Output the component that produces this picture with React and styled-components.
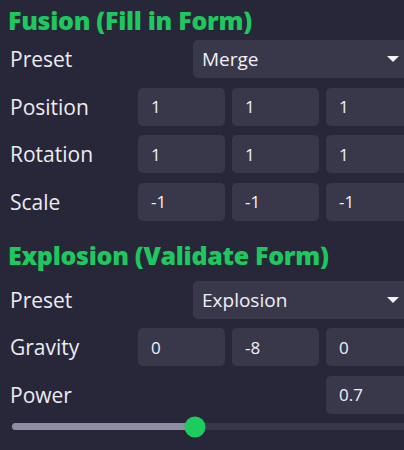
import React from "react";
import styled, { createGlobalStyle } from "styled-components";

const GlobalStyle = createGlobalStyle`
  html, body {
    margin: 0;
    padding: 0;
    background: #28273a;
  }
  body {
    font-family: "Open Sans", Lato, sans-serif;
  }
`;

const fusion = [
  { label: "Position", values: ["1", "1", "1"] },
  { label: "Rotation", values: ["1", "1", "1"] },
  { label: "Scale", values: ["-1", "-1", "-1"] },
];

const power = 0.456;

const App = () => {
  return (
    <Wrapper>
      <GlobalStyle />
      <Heading>Fusion (Fill in Form)</Heading>
      <Row>
        <Label>Preset</Label>
        <Select>
          <span>Merge</span>
          <Caret />
        </Select>
      </Row>
      {fusion.map((row) => (
        <Row key={row.label}>
          <Label>{row.label}</Label>
          <Fields>
            {row.values.map((v, i) => (
              <Field key={i}>{v}</Field>
            ))}
          </Fields>
        </Row>
      ))}

      <Heading second>Explosion (Validate Form)</Heading>
      <Row>
        <Label>Preset</Label>
        <Select>
          <span>Explosion</span>
          <Caret />
        </Select>
      </Row>
      <Row>
        <Label>Gravity</Label>
        <Fields>
          <Field>0</Field>
          <Field>-8</Field>
          <Field>0</Field>
        </Fields>
      </Row>
      <Row>
        <Label>Power</Label>
        <Fields>
          <Field column={3}>0.7</Field>
        </Fields>
      </Row>
      <Slider>
        <Fill style={{ width: `${power * 100}%` }} />
        <Thumb style={{ left: `${power * 100}%` }} />
      </Slider>
    </Wrapper>
  );
};
export default App;

const Wrapper = styled.div`
  width: 404px;
  height: 450px;
  overflow: hidden;
  background: #28273a;
  color: #eeeef2;
  padding-left: 10px;
  box-sizing: border-box;
`;

const Heading = styled.h2`
  margin: 0;
  margin-left: -2px;
  height: ${(p) => (p.second ? "50.5px" : "40px")};
  display: flex;
  align-items: center;
  white-space: nowrap;
  font-size: 25px;
  font-weight: 800;
  color: #1ec85f;
  letter-spacing: -0.3px;
`;

const Row = styled.div`
  display: flex;
  align-items: center;
  height: 38px;
  width: 403px;
  margin-bottom: 9.5px;
`;

const Label = styled.div`
  width: 128px;
  flex-shrink: 0;
  font-size: 21px;
  color: #ececf0;
`;

const Fields = styled.div`
  display: grid;
  grid-template-columns: repeat(3, 87px);
  gap: 7px;
  height: 100%;
  flex-shrink: 0;
`;

const Field = styled.div`
  grid-column: ${(p) => p.column || "auto"};
  background: #39384b;
  border-radius: 5px;
  display: flex;
  align-items: center;
  padding-left: 13px;
  font-size: 17px;
  color: #f2f2f6;
`;

const Select = styled.div`
  margin-left: 55px;
  width: 220px;
  height: 100%;
  flex-shrink: 0;
  background: #39384b;
  border-radius: 5px;
  display: flex;
  align-items: center;
  justify-content: space-between;
  padding: 0 14px 0 9px;
  box-sizing: border-box;
  font-size: 19px;
  color: #f0f0f4;
`;

const Caret = styled.span`
  width: 0;
  height: 0;
  border-left: 6.5px solid transparent;
  border-right: 6.5px solid transparent;
  border-top: 6px solid #f4f4f8;
`;

const Slider = styled.div`
  position: relative;
  margin-top: 5px;
  margin-left: 2px;
  width: 401px;
  height: 7px;
  border-radius: 4px;
  background: #38374a;
`;

const Fill = styled.div`
  height: 100%;
  border-radius: 4px;
  background: #8f8da4;
`;

const Thumb = styled.div`
  position: absolute;
  top: 50%;
  width: 21px;
  height: 21px;
  border-radius: 50%;
  background: #1ecb5f;
  transform: translate(-50%, -50%);
`;
